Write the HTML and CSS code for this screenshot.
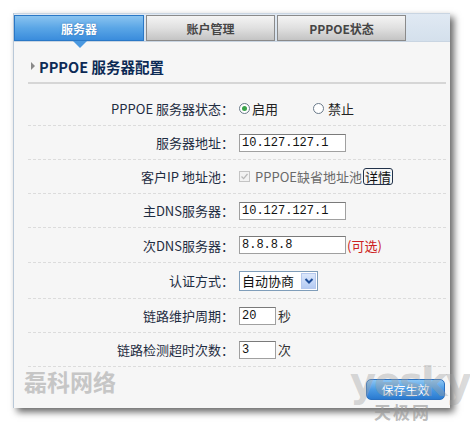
FILE: index.html
```html
<!DOCTYPE html>
<html lang="zh">
<head>
<meta charset="utf-8">
<link rel="stylesheet" href="styles.css">
</head>
<body>
<div class="panel">
  <div class="tabs">
    <div class="tab active">服务器<span class="pointer"></span></div>
    <div class="tab">账户管理</div>
    <div class="tab">PPPOE状态</div>
  </div>
  <div class="title"><span class="marker"></span>PPPOE 服务器配置</div>
  <div class="rule"></div>
  <div class="rows">
    <div class="row">
      <div class="label">PPPOE 服务器状态：</div>
      <div class="value">
        <span class="radio on"></span><span class="opt">启用</span>
        <span class="radio second"></span><span class="opt">禁止</span>
      </div>
    </div>
    <div class="row">
      <div class="label">服务器地址：</div>
      <div class="value"><span class="input w106">10.127.127.1</span></div>
    </div>
    <div class="row">
      <div class="label">客户IP 地址池：</div>
      <div class="value">
        <span class="check"><svg width="9" height="9" viewBox="0 0 9 9"><path d="M1.5 4.5 L3.6 6.6 L7.5 2" fill="none" stroke="#b8b8b8" stroke-width="1.3"/></svg></span>
        <span class="muted">PPPOE缺省地址池</span><span class="detail">详情</span>
      </div>
    </div>
    <div class="row">
      <div class="label">主DNS服务器：</div>
      <div class="value"><span class="input w106">10.127.127.1</span></div>
    </div>
    <div class="row r35">
      <div class="label">次DNS服务器：</div>
      <div class="value"><span class="input w106">8.8.8.8</span><span class="optional">(可选)</span></div>
    </div>
    <div class="row r36">
      <div class="label">认证方式：</div>
      <div class="value">
        <span class="select">自动协商<span class="arrow"><svg width="10" height="8" viewBox="0 0 10 8"><path d="M1.5 2 L5 5.5 L8.5 2" fill="none" stroke="#1e4e9a" stroke-width="2"/></svg></span></span>
      </div>
    </div>
    <div class="row">
      <div class="label">链路维护周期：</div>
      <div class="value"><span class="input w36">20</span><span class="unit">秒</span></div>
    </div>
    <div class="row">
      <div class="label">链路检测超时次数：</div>
      <div class="value"><span class="input w36">3</span><span class="unit">次</span></div>
    </div>
  </div>
  <div class="footer">
    <span class="brand">磊科网络</span>
    <span class="save">保存生效</span>
  </div>
</div>
<div class="watermark">yesky<span class="wm-sub">天极网</span></div>
</body>
</html>
```
FILE: styles.css
```css
html, body {
  margin: 0;
  padding: 0;
  background: #ffffff;
}
body {
  width: 470px;
  height: 429px;
  position: relative;
  overflow: hidden;
  font-family: "Noto Sans CJK SC", "Noto Sans", sans-serif;
}
.panel {
  margin: 13px 0 0 13px;
  width: 437px;
  height: 395px;
  background: #f6f6f6;
  border-left: 1px solid #b9c8d8;
  box-sizing: border-box;
  box-shadow: 4px 4px 7px rgba(0,0,0,0.6);
  display: flex;
  flex-direction: column;
}
.tabs {
  height: 29px;
  background: linear-gradient(#e0e9f3, #d4e0ec);
  border-top: 1px solid #c9d5e2;
  border-bottom: 1px solid #c9d5e2;
  box-sizing: border-box;
  display: flex;
  gap: 2px;
  padding: 1px 0 0 0;
}
.tab {
  position: relative;
  width: 129px;
  height: 26px;
  box-sizing: border-box;
  border: 1px solid #8a8a8a;
  background: linear-gradient(#f4f4f4, #e0e0e0 50%, #c4c4c4);
  color: #454545;
  font-size: 12px;
  font-weight: bold;
  display: flex;
  align-items: center;
  justify-content: center;
}
.tab.active {
  width: 130px;
  background: linear-gradient(#8ac4f0, #5aa6e6 50%, #3a8cdc);
  border-color: #2a78c6;
  color: #ffffff;
  text-shadow: 0 0 2px #2a6ab0;
}
.pointer {
  position: absolute;
  left: 58px;
  bottom: -8px;
  width: 0;
  height: 0;
  border-left: 7px solid transparent;
  border-right: 7px solid transparent;
  border-top: 7px solid #4a98e0;
}
.title {
  margin: 14px 0 0 17px;
  height: 20px;
  display: flex;
  align-items: center;
  font-size: 14.5px;
  font-weight: bold;
  color: #0c2a55;
}
.marker {
  width: 0;
  height: 0;
  border-top: 4px solid transparent;
  border-bottom: 4px solid transparent;
  border-left: 4px solid #8a8a8a;
  margin-right: 4px;
}
.rule {
  margin: 6px 4px 0 14px;
  height: 2px;
  background: #d6d6d6;
}
.rows {
  margin: 8px 4px 0 14px;
  display: flex;
  flex-direction: column;
}
.row {
  height: 34px;
  box-sizing: border-box;
  border-bottom: 1px dashed #dcdcdc;
  display: flex;
  align-items: center;
  font-size: 13px;
  color: #1f2d42;
}
.row.r35 { height: 35px; }
.row.r36 { height: 36px; }
.label {
  width: 206px;
  text-align: right;
  white-space: nowrap;
}
.value {
  margin-left: 5px;
  display: flex;
  align-items: center;
  white-space: nowrap;
}
.radio {
  width: 11px;
  height: 11px;
  box-sizing: border-box;
  border: 1px solid #6a7a8a;
  border-radius: 50%;
  background: #ffffff;
  position: relative;
  margin-right: 2px;
}
.radio.on::after {
  content: "";
  position: absolute;
  left: 2px;
  top: 2px;
  width: 5px;
  height: 5px;
  border-radius: 50%;
  background: #3aa34a;
}
.radio.second { margin-left: 35px; margin-right: 4px; }
.opt { color: #222; }
.input {
  height: 18px;
  box-sizing: border-box;
  border: 1px solid #a0a0a0;
  border-top-color: #7a7a7a;
  background: #ffffff;
  font-family: "Liberation Mono", "DejaVu Sans Mono", monospace;
  font-size: 12px;
  color: #111;
  padding: 0 2px;
  display: flex;
  align-items: center;
}
.w106 { width: 107px; }
.w36 { width: 37px; }
.unit { margin-left: 2px; color: #333; }
.optional { color: #cc2020; margin-left: 1px; }
.check {
  width: 11px;
  height: 11px;
  box-sizing: border-box;
  border: 1px solid #c4c4c4;
  background: #f2f2f2;
  display: flex;
  align-items: center;
  justify-content: center;
  margin-right: 5px;
}
.muted { color: #6a6a6a; }
.detail {
  border: 1px solid #22324a;
  border-radius: 3px;
  padding: 0 1px;
  line-height: 15px;
  color: #111;
  margin-left: 1px;
}
.select {
  width: 79px;
  height: 20px;
  box-sizing: border-box;
  border: 1px solid #7f9db9;
  background: #ffffff;
  display: flex;
  align-items: center;
  justify-content: space-between;
  padding-left: 2px;
  color: #111;
}
.arrow {
  width: 15px;
  height: 16px;
  margin-right: 1px;
  background: linear-gradient(#dbe7fb, #b4cbf3);
  border: 1px solid #b6c9ee;
  box-sizing: border-box;
  display: flex;
  align-items: center;
  justify-content: center;
}
.footer {
  margin: 5px 5px 0 10px;
  display: flex;
  align-items: flex-start;
  justify-content: space-between;
}
.brand {
  font-family: "Liberation Serif", "Noto Sans CJK SC", serif;
  font-size: 23px;
  font-weight: bold;
  color: #c6c6c6;
  line-height: 24px;
}
.save {
  margin-top: 7px;
  width: 79px;
  height: 21px;
  border-radius: 5px;
  border: 1px solid #2a70c0;
  box-sizing: border-box;
  background: linear-gradient(#8cc6f4, #4a9ae4 50%, #2a7ad0);
  color: #ffffff;
  font-size: 12px;
  display: flex;
  align-items: center;
  justify-content: center;
}
.watermark {
  position: absolute;
  left: 350px;
  top: 362px;
  font-family: "DejaVu Sans", sans-serif;
  font-weight: bold;
  font-size: 40px;
  line-height: 40px;
  color: rgba(160,160,160,0.4);
  letter-spacing: -2px;
}
.wm-sub {
  position: absolute;
  left: 24px;
  top: 41px;
  font-family: "Noto Sans CJK SC", sans-serif;
  font-size: 17px;
  line-height: 18px;
  letter-spacing: 2px;
  color: rgba(150,150,150,0.65);
}
```
